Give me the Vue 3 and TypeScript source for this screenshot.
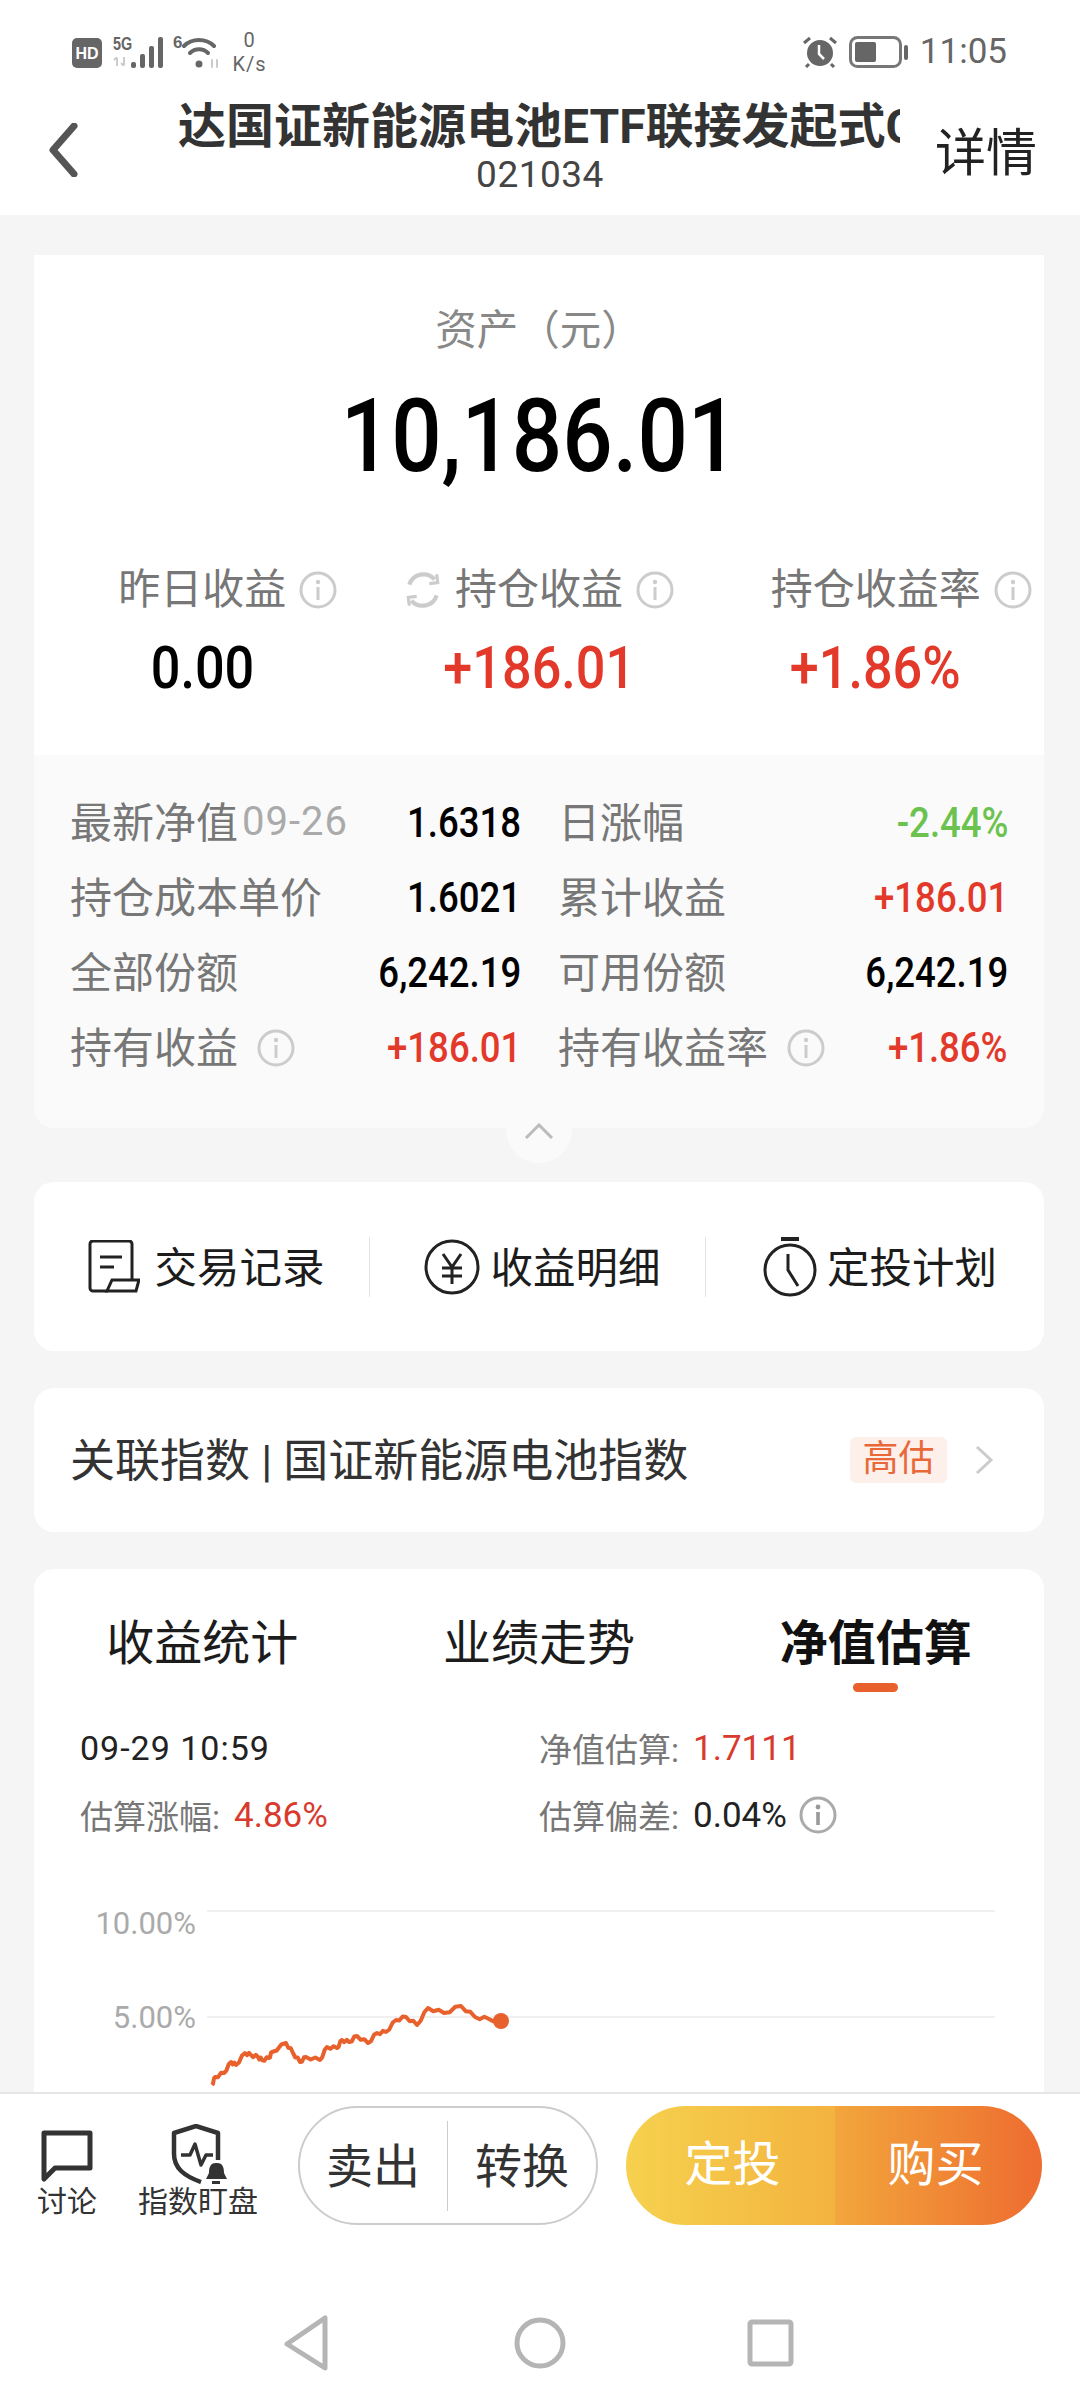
<template>
  <div class="page">
    <div class="statusbar">
      <svg class="hd" width="30" height="30" viewBox="0 0 30 30">
        <rect width="30" height="30" rx="5" fill="#666" />
        <text x="15" y="21" text-anchor="middle" class="hd-text">HD</text>
      </svg>
      <div class="net">
        <span class="net-tag">5G</span>
        <svg width="16" height="9" viewBox="0 0 16 9"><path d="M4 9V1M1 3l3-3M11 0v8M8 6l3 3" stroke="#ccc" stroke-width="2" fill="none" /></svg>
      </div>
      <svg class="bars" width="32" height="31" viewBox="0 0 32 31" fill="#666">
        <rect x="0" y="25" width="5" height="6" rx="2" />
        <rect x="9" y="17" width="5" height="14" rx="2" />
        <rect x="18" y="9" width="5" height="22" rx="2" />
        <rect x="27" y="0" width="5" height="31" rx="2" />
      </svg>
      <span class="wifi-tag">6</span>
      <svg class="wifi" width="38" height="32" viewBox="0 0 38 32" fill="none" stroke="#666" stroke-width="4" stroke-linecap="round">
        <path d="M2 9C10 1 24 1 32 9" />
        <path d="M8 16c5-5 13-5 18 0" />
        <circle cx="17" cy="27" r="3.5" fill="#666" stroke="none" />
        <path d="M30 23v7M35 23v7" stroke="#ccc" stroke-width="2" />
      </svg>
      <div class="speed"><span>0</span><span>K/s</span></div>
      <div class="status-right">
        <svg width="36" height="32" viewBox="0 0 36 32">
          <circle cx="18" cy="17" r="13" fill="#666" />
          <path d="M2 7l6-5M34 7l-6-5M7 28l-3 3M29 28l3 3" stroke="#666" stroke-width="3" />
          <path d="M17 9v9l5 5" stroke="#fff" stroke-width="2.5" fill="none" />
        </svg>
        <svg class="battery" width="60" height="32" viewBox="0 0 60 32">
          <rect x="1.5" y="1.5" width="50" height="29" rx="7" fill="none" stroke="#777" stroke-width="3" />
          <rect x="6" y="6" width="21" height="20" rx="2" fill="#666" />
          <rect x="55" y="9" width="4" height="15" rx="2" fill="#666" />
        </svg>
        <span class="clock">11:05</span>
      </div>
    </div>

    <header class="header">
      <div class="back">
        <svg width="30" height="54" viewBox="0 0 30 54" fill="none" stroke="#555" stroke-width="7" stroke-linecap="round" stroke-linejoin="round">
          <path d="M25 3L4 27l21 24" />
        </svg>
      </div>
      <div class="title-box">
        <div class="title">达国证新能源电池ETF联接发起式C</div>
        <div class="code">021034</div>
      </div>
      <div class="detail-link">详情</div>
    </header>

    <main class="main">
      <section class="summary">
        <div class="asset-label">资产（元）</div>
        <div class="asset-value"><span class="num">10,186.01</span></div>
        <div class="stats">
          <div v-for="s in stats" :key="s.label" class="stat">
            <div class="stat-label">
              <svg v-if="s.refresh" class="refresh" width="40" height="40" viewBox="0 0 38 38" fill="none" stroke="#ccc" stroke-width="4">
                <path d="M6 14a14 14 0 0 1 24-5M32 24a14 14 0 0 1-24 5" />
                <path d="M25 13l8-1-1-8M13 25l-8 1 1 8" stroke-width="3" />
              </svg>
              {{ s.label }}
              <svg class="stat-info" width="38" height="38" viewBox="0 0 38 38">
                <circle cx="19" cy="19" r="17" fill="none" stroke="#ccc" stroke-width="3" />
                <circle cx="19" cy="11" r="2.2" fill="#ccc" />
                <rect x="17.5" y="16" width="3" height="13" fill="#ccc" />
              </svg>
            </div>
            <div class="stat-value" :class="s.tone"><span class="num">{{ s.value }}</span></div>
          </div>
        </div>
      </section>

      <section class="details">
        <div v-for="d in details" :key="d.label" class="detail-row">
          <span class="detail-label">
            <span class="detail-text">{{ d.label }}</span>
            <span v-if="d.date" class="detail-date">{{ d.date }}</span>
            <svg v-if="d.info" class="info" width="38" height="38" viewBox="0 0 38 38">
              <circle cx="19" cy="19" r="17" fill="none" stroke="#ccc" stroke-width="3" />
              <circle cx="19" cy="11" r="2.2" fill="#ccc" />
              <rect x="17.5" y="16" width="3" height="13" fill="#ccc" />
            </svg>
          </span>
          <span class="detail-value" :class="d.tone"><span class="num num-right">{{ d.value }}</span></span>
        </div>
      </section>
      <div class="collapse">
        <svg width="30" height="16" viewBox="0 0 30 16" fill="none" stroke="#bbb" stroke-width="3"><path d="M2 15L15 2l13 13" /></svg>
      </div>

      <section class="actions card">
        <div class="action">
          <svg width="52" height="53" viewBox="0 0 52 53" fill="none" stroke="#222" stroke-width="3">
            <path d="M20 51H5a3 3 0 0 1-3-3V4a3 3 0 0 1 3-3h36a3 3 0 0 1 3 3v36" />
            <path d="M12 17h22M12 27h14" />
            <path d="M24 40h27l-3 11H19z" />
          </svg>
          <span>交易记录</span>
        </div>
        <div class="action tight">
          <svg width="56" height="56" viewBox="0 0 56 56" fill="none" stroke="#222" stroke-width="3">
            <circle cx="28" cy="28" r="26" />
            <path d="M19 15l9 13 9-13M18 29h20M18 37h20M28 28v17" />
          </svg>
          <span>收益明细</span>
        </div>
        <div class="action tight">
          <svg width="54" height="60" viewBox="0 0 54 60" fill="none" stroke="#222" stroke-width="3">
            <path d="M18 2h18" stroke-width="4" />
            <circle cx="27" cy="33" r="25" />
            <path d="M25 17v16l10 16" />
          </svg>
          <span>定投计划</span>
        </div>
      </section>

      <section class="index card">
        <span class="index-name">关联指数 | 国证新能源电池指数</span>
        <span class="index-tag">高估</span>
        <svg width="20" height="32" viewBox="0 0 20 32" fill="none" stroke="#ccc" stroke-width="3"><path d="M3 3l14 13L3 29" /></svg>
      </section>

      <section class="chart-card card">
        <div class="tabs">
          <div v-for="t in tabs" :key="t.name" class="tab" :class="{ active: t.active }">
            {{ t.name }}
            <i class="tab-bar"></i>
          </div>
        </div>
        <div class="info-grid">
          <div class="info-cell time">09-29 10:59</div>
          <div class="info-cell"><span class="muted">净值估算:</span><span class="val red">1.7111</span></div>
          <div class="info-cell"><span class="muted">估算涨幅:</span><span class="val red">4.86%</span></div>
          <div class="info-cell">
            <span class="muted">估算偏差:</span><span class="val dark">0.04%</span>
            <svg class="info-dark" width="38" height="38" viewBox="0 0 38 38">
              <circle cx="19" cy="19" r="17" fill="none" stroke="#aaa" stroke-width="3" />
              <circle cx="19" cy="11" r="2.4" fill="#999" />
              <rect x="17.2" y="16" width="3.6" height="13" fill="#999" />
            </svg>
          </div>
        </div>
        <svg class="chart" width="1010" height="212" viewBox="34 1880 1010 212">
          <line x1="207" y1="1911" x2="995" y2="1911" stroke="#f0f0f0" stroke-width="2" />
          <line x1="207" y1="2017" x2="995" y2="2017" stroke="#f0f0f0" stroke-width="2" />
          <text x="196" y="1934" text-anchor="end" class="axis">10.00%</text>
          <text x="196" y="2028" text-anchor="end" class="axis">5.00%</text>
          <polyline :points="linePoints" fill="none" stroke="#e8602c" stroke-width="4" stroke-linejoin="round" />
          <circle cx="501" cy="2021" r="8" fill="#e8602c" />
        </svg>
      </section>
    </main>

    <footer class="bottom">
      <div class="toolbar">
        <div class="tool">
          <svg width="52" height="60" viewBox="0 0 52 60" fill="none" stroke="#333" stroke-width="5" stroke-linejoin="round">
            <path d="M3 9h46v35H14L3 55z" />
          </svg>
          <span>讨论</span>
        </div>
        <div class="tool">
          <svg width="60" height="60" viewBox="0 0 60 60" fill="none" stroke="#333" stroke-width="4.5" stroke-linejoin="round">
            <path d="M33 58C16 52 6 44 6 30V9L28 2l22 7v27" />
            <path d="M13 31h9l5-11 6 21 5-10h7" stroke-width="3.5" />
            <path d="M48 39c-6 0-7 5-7 10l-3 6h21l-3-6c0-5-1-10-7-10zM44 57h8v3h-8z" fill="#333" stroke="none" />
          </svg>
          <span>指数盯盘</span>
        </div>
        <div class="sell-group">
          <span>卖出</span>
          <i class="sell-line"></i>
          <span>转换</span>
        </div>
        <div class="buy-group">
          <span class="buy-left">定投</span>
          <span class="buy-right">购买</span>
        </div>
      </div>
      <nav class="navbar">
        <svg width="60" height="60" viewBox="0 0 60 60" fill="none" stroke="#b5b5b5" stroke-width="5" stroke-linejoin="round"><path d="M46 5v50L8 31z" /></svg>
        <svg width="60" height="60" viewBox="0 0 60 60" fill="none" stroke="#b5b5b5" stroke-width="5"><circle cx="30" cy="30" r="23" /></svg>
        <svg width="60" height="60" viewBox="0 0 60 60" fill="none" stroke="#b5b5b5" stroke-width="5"><rect x="9" y="9" width="41" height="42" rx="2" /></svg>
      </nav>
    </footer>
  </div>
</template>

<script setup lang="ts">
interface Stat {
  label: string;
  value: string;
  tone: string;
  refresh?: boolean;
}
interface Detail {
  label: string;
  value: string;
  tone: string;
  date?: string;
  info?: boolean;
}

const stats: Stat[] = [
  { label: '昨日收益', value: '0.00', tone: 'black' },
  { label: '持仓收益', value: '+186.01', tone: 'up', refresh: true },
  { label: '持仓收益率', value: '+1.86%', tone: 'up' },
]

const details: Detail[] = [
  { label: '最新净值', date: '09-26', value: '1.6318', tone: 'black' },
  { label: '日涨幅', value: '-2.44%', tone: 'down' },
  { label: '持仓成本单价', value: '1.6021', tone: 'black' },
  { label: '累计收益', value: '+186.01', tone: 'up' },
  { label: '全部份额', value: '6,242.19', tone: 'black' },
  { label: '可用份额', value: '6,242.19', tone: 'black' },
  { label: '持有收益', value: '+186.01', tone: 'up', info: true },
  { label: '持有收益率', value: '+1.86%', tone: 'up', info: true },
]

const tabs = [
  { name: '收益统计', active: false },
  { name: '业绩走势', active: false },
  { name: '净值估算', active: true },
]

// traced from the curve, in page pixels
const curve: [number, number][] = [
  [212, 2085], [215, 2077], [224, 2073], [231, 2062], [236, 2065], [245, 2053], [251, 2055],
  [258, 2057], [262, 2060], [269, 2058], [272, 2052], [286, 2043], [293, 2053], [300, 2062],
  [306, 2057], [320, 2060], [327, 2047], [337, 2048], [342, 2040], [349, 2042], [357, 2036],
  [368, 2043], [377, 2033], [386, 2032], [396, 2020], [406, 2017], [417, 2025], [428, 2008],
  [444, 2013], [461, 2006], [475, 2017], [489, 2019], [501, 2021],
]

// the real line is noisy, so add a small zigzag between the traced points
const linePoints = curve
  .flatMap(([x, y], i) => {
    if (i === 0) return [`${x},${y}`]
    const [px, py] = curve[i - 1]
    const out: string[] = []
    for (let k = 1; k <= 3; k++) {
      const t = k / 3
      const wobble = k === 3 ? 0 : (k % 2 ? 1.5 : -1.5)
      out.push(`${(px + (x - px) * t).toFixed(1)},${(py + (y - py) * t + wobble).toFixed(1)}`)
    }
    return out
  })
  .join(' ')
</script>

<style>
html, body {
  margin: 0;
  background: #fff;
}
</style>

<style scoped>
.page {
  width: 1080px;
  height: 2400px;
  display: flex;
  flex-direction: column;
  overflow: hidden;
  background: #fff;
  font-family: Roboto, "Noto Sans CJK SC", sans-serif;
}

.statusbar {
  height: 90px;
  flex: none;
  display: flex;
  align-items: flex-start;
  padding: 36px 73px 0 72px;
  box-sizing: border-box;
  color: #666;
}
.hd {
  margin-top: 2px;
}
.hd-text {
  font: 700 16px "Liberation Sans", sans-serif;
  fill: #fff;
}
.net {
  width: 18px;
  margin-left: 11px;
  display: flex;
  flex-direction: column;
  gap: 4px;
}
.net-tag {
  font: 700 18px/17px "Liberation Sans", sans-serif;
  transform: scaleX(.8);
  transform-origin: left;
  white-space: nowrap;
}
.bars {
  margin-top: 1px;
}
.wifi-tag {
  font: 700 17px/14px "Liberation Sans", sans-serif;
  margin-left: 10px;
}
.wifi {
  margin-top: 1px;
}
.speed {
  margin: -8px 0 0 12px;
  display: flex;
  flex-direction: column;
  align-items: center;
  font-size: 20px;
  line-height: 24px;
  letter-spacing: 1px;
}
.status-right {
  margin-left: auto;
  display: flex;
  align-items: center;
  gap: 11px;
}
.clock {
  font: 400 35px/32px Roboto, sans-serif;
}

.header {
  height: 125px;
  flex: none;
  display: flex;
  align-items: flex-start;
}
.back {
  width: 178px;
  flex: none;
  padding: 33px 0 0 49px;
  box-sizing: border-box;
}
.title-box {
  width: 722px;
  flex: none;
  padding-top: 9px;
  text-align: center;
}
.title {
  font-size: 48px;
  line-height: 56px;
  font-weight: 700;
  color: #333;
  white-space: nowrap;
  overflow: hidden;
  text-align: left;
}
.code {
  font-size: 37px;
  line-height: 40px;
  letter-spacing: .5px;
  color: #444;
  margin-left: 2px;
}
.detail-link {
  font-size: 51px;
  line-height: 60px;
  margin: 34px 0 0 35px;
  color: #222;
}

.main {
  flex: 1;
  min-height: 0;
  overflow: hidden;
  background: #f5f5f5;
  padding: 40px 36px 0 34px;
}
.num {
  display: inline-block;
  transform: scaleX(.87);
}
.num-right {
  transform-origin: right;
}
.black { color: #000; }
.up { color: #e2392b; }
.down { color: #6cc24f; }

.summary {
  background: #fff;
  padding: 52px 0 52px;
  text-align: center;
}
.asset-label {
  font-size: 41.5px;
  line-height: 48px;
  color: #888;
  text-spacing-trim: space-all;
}
.asset-value {
  margin-top: 26px;
  font-size: 102px;
  line-height: 110px;
  font-weight: 500;
  color: #000;
}
.stats {
  margin-top: 74px;
  display: grid;
  grid-template-columns: repeat(3, 1fr);
}
.stat-label {
  position: relative;
  display: inline-block;
  font-size: 42px;
  line-height: 50px;
  color: #777;
}
.stat-info {
  position: absolute;
  left: 100%;
  top: 6px;
  margin-left: 13px;
}
.refresh {
  position: absolute;
  right: 100%;
  top: 5px;
  margin-right: 12px;
}
.stat-value {
  margin-top: 18px;
  font-size: 60px;
  line-height: 70px;
  font-weight: 500;
}

.details {
  background: #fafafa;
  border-radius: 0 0 20px 20px;
  padding: 30px 36px 43px;
  display: grid;
  grid-template-columns: 451px 450px;
  column-gap: 37px;
}
.detail-row {
  height: 75px;
  display: flex;
  align-items: center;
  justify-content: space-between;
}
.detail-label {
  display: flex;
  align-items: center;
  font-size: 42px;
  color: #777;
}
.detail-text {
  margin-top: -6px;
}
.detail-date {
  font-size: 40px;
  letter-spacing: 1px;
  color: #aaa;
  margin-left: 4px;
  margin-top: -2px;
}
.info {
  margin-left: 19px;
}
.detail-value {
  font-size: 42px;
  font-weight: 500;
}

.collapse {
  width: 66px;
  height: 45px;
  margin: -10px auto 19px;
  position: relative;
  background: #fafafa;
  border-radius: 0 0 33px 33px;
  display: flex;
  justify-content: center;
  padding-top: 5px;
  box-sizing: border-box;
}

.card {
  background: #fff;
  border-radius: 20px;
}

.actions {
  height: 169px;
  display: grid;
  grid-template-columns: 335px 336px 339px;
  align-items: center;
}
.action {
  height: 60px;
  display: flex;
  align-items: center;
  justify-content: center;
  gap: 14px;
  padding-left: 10px;
  font-size: 42.5px;
  color: #1c1c1c;
}
.action span {
  padding-bottom: 5px;
}
.action.tight {
  gap: 10px;
}
.action + .action {
  border-left: 1px solid #e2e2e2;
}

.index {
  margin-top: 37px;
  height: 144px;
  padding: 0 50px 0 36px;
  display: flex;
  align-items: center;
}
.index-name {
  font-size: 45px;
  color: #333;
  padding-bottom: 5px;
}
.index-tag {
  margin-left: auto;
  width: 97px;
  height: 46px;
  line-height: 44px;
  text-align: center;
  background: #fdf0ea;
  border-radius: 6px;
  font-size: 36px;
  color: #e8683a;
  margin-right: 27px;
}

.chart-card {
  margin-top: 37px;
  padding-top: 45px;
  border-radius: 20px 20px 0 0;
}
.tabs {
  display: grid;
  grid-template-columns: repeat(3, 1fr);
  text-align: center;
}
.tab {
  font-size: 48px;
  line-height: 60px;
  color: #1c1c1c;
  display: flex;
  flex-direction: column;
  align-items: center;
}
.tab-bar {
  width: 45px;
  height: 9px;
  margin-top: 9px;
  border-radius: 5px;
  background: transparent;
}
.tab.active {
  font-weight: 700;
  color: #111;
}
.tab.active .tab-bar {
  background: #e8602c;
}

.info-grid {
  margin-top: 34px;
  padding-left: 46px;
  display: grid;
  grid-template-columns: 459px 1fr;
  row-gap: 23px;
}
.info-cell {
  height: 44px;
  display: flex;
  align-items: center;
  font-size: 33px;
  white-space: pre;
}
.time {
  color: #222;
  font-size: 34px;
  letter-spacing: 1px;
}
.muted { color: #777; }
.val {
  font-size: 35px;
  margin-left: 14px;
}
.red { color: #d93a2e; }
.dark { color: #222; }
.info-dark {
  margin-left: 12px;
}
.chart {
  display: block;
  margin-top: 43px;
}
.axis {
  font: 400 31px Roboto, sans-serif;
  fill: #aaa;
}

.bottom {
  height: 308px;
  flex: none;
  box-sizing: border-box;
  border-top: 2px solid #e6e6e6;
  background: #fff;
}
.toolbar {
  height: 119px;
  margin-top: 12px;
  display: flex;
}
.tool {
  width: 132px;
  padding-top: 18px;
  display: flex;
  flex-direction: column;
  align-items: center;
  font-size: 30px;
  line-height: 36px;
  color: #333;
}
.tool:first-child {
  width: 134px;
}
.tool:nth-child(2) {
  margin-left: -2px;
  margin-right: 2px;
}
.sell-group {
  margin-left: 32px;
  width: 300px;
  box-sizing: border-box;
  border: 2px solid #ccc;
  border-radius: 60px;
  display: flex;
  align-items: center;
  justify-content: space-between;
  padding: 0 27px 0 26px;
  font-size: 47px;
  color: #333;
}
.sell-group span {
  padding-bottom: 6px;
}
.sell-line {
  width: 1px;
  height: 90px;
  background: #ccc;
}
.buy-group {
  margin-left: 28px;
  width: 416px;
  border-radius: 60px;
  overflow: hidden;
  display: flex;
  font-size: 48px;
  line-height: 118px;
  color: #fff;
  text-align: center;
}
.buy-left {
  width: 209px;
  padding-left: 4px;
  box-sizing: border-box;
  background: linear-gradient(90deg, #f6d14e, #f3b33f);
}
.buy-right {
  flex: 1;
  padding-right: 6px;
  background: linear-gradient(90deg, #f2a63c, #ee6c30);
}

.navbar {
  margin-top: 88px;
  display: flex;
  justify-content: center;
  gap: 171px;
}
</style>
